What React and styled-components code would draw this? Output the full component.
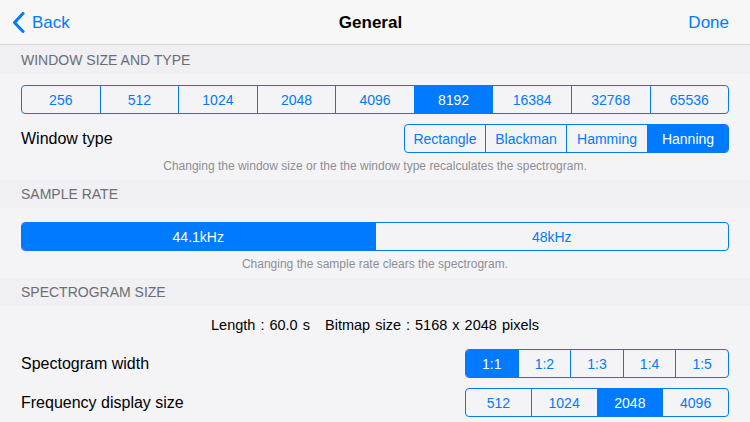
import React from "react";
import styled, { createGlobalStyle } from "styled-components";

const GlobalStyle = createGlobalStyle`
  html, body {
    margin: 0;
    padding: 0;
    background: #f4f4f7;
    font-family: "Liberation Sans", Arial, sans-serif;
    -webkit-font-smoothing: antialiased;
  }
`;

const BLUE = "#007aff";

const Page = styled.div`
  width: 750px;
  height: 422px;
  overflow: hidden;
  background: #f4f4f7;
`;

const NavBar = styled.header`
  height: 44px;
  display: grid;
  grid-template-columns: 1fr auto 1fr;
  align-items: center;
  background: #f7f7f8;
  border-bottom: 1px solid #d3d3d8;
  padding: 1px 21px 0 12px;
  box-sizing: border-box;
  height: 45px;
`;

const NavButton = styled.span`
  display: flex;
  align-items: center;
  gap: 7px;
  color: ${BLUE};
  font-size: 17px;
  justify-self: ${(p) => (p.$right ? "end" : "start")};
`;

const Title = styled.h1`
  margin: 0;
  font-size: 17px;
  font-weight: bold;
  color: #000;
`;

const SectionHeader = styled.div`
  height: ${(p) => p.$h || 28}px;
  display: flex;
  align-items: center;
  padding-left: 21px;
  background: #efeff4;
  color: #6d6d72;
  font-size: 14px;
  text-transform: uppercase;
`;

const Section = styled.section`
  padding: ${(p) => p.$top}px 21px ${(p) => p.$bottom}px;
`;

const Row = styled.div`
  display: flex;
  align-items: center;
  justify-content: space-between;
  margin-top: ${(p) => p.$mt || 0}px;
`;

const Label = styled.span`
  font-size: 16px;
  color: #000;
`;

const Note = styled.p`
  margin: 6px 0 0;
  font-size: 12px;
  line-height: 14px;
  color: #8e8e93;
  text-align: center;
`;

const Info = styled.p`
  margin: 0;
  font-size: 14.5px;
  line-height: 18px;
  color: #000;
  text-align: center;
  word-spacing: 1px;
`;

const Segments = styled.div`
  display: flex;
  width: ${(p) => p.$w}px;
  height: 29px;
  border: 1px solid ${BLUE};
  border-radius: 4px;
  overflow: hidden;
  box-sizing: border-box;
`;

const Segment = styled.div`
  flex: 1;
  display: flex;
  align-items: center;
  justify-content: center;
  font-size: 14px;
  color: ${(p) => (p.$on ? "#fff" : BLUE)};
  background: ${(p) => (p.$on ? BLUE : "transparent")};
  & + & {
    border-left: 1px solid ${BLUE};
  }
`;

const SegmentedControl = ({ items, selected, width }) => (
  <Segments $w={width}>
    {items.map((it) => (
      <Segment key={it} $on={it === selected}>
        {it}
      </Segment>
    ))}
  </Segments>
);

const Chevron = () => (
  <svg width="13" height="21" viewBox="0 0 13 21">
    <path
      d="M11 1.5 L2.5 10.5 L11 19.5"
      fill="none"
      stroke={BLUE}
      strokeWidth="3"
      strokeLinecap="round"
      strokeLinejoin="round"
    />
  </svg>
);

export default function App() {
  return (
    <Page>
      <GlobalStyle />
      <NavBar>
        <NavButton>
          <Chevron />
          Back
        </NavButton>
        <Title>General</Title>
        <NavButton $right>Done</NavButton>
      </NavBar>

      <SectionHeader $h={29}>Window size and type</SectionHeader>
      <Section $top={11} $bottom={7}>
        <SegmentedControl
          width={708}
          selected="8192"
          items={["256", "512", "1024", "2048", "4096", "8192", "16384", "32768", "65536"]}
        />
        <Row $mt={10}>
          <Label>Window type</Label>
          <SegmentedControl
            width={325}
            selected="Hanning"
            items={["Rectangle", "Blackman", "Hamming", "Hanning"]}
          />
        </Row>
        <Note>Changing the window size or the the window type recalculates the spectrogram.</Note>
      </Section>

      <SectionHeader>Sample rate</SectionHeader>
      <Section $top={14} $bottom={7}>
        <SegmentedControl width={708} selected="44.1kHz" items={["44.1kHz", "48kHz"]} />
        <Note>Changing the sample rate clears the spectrogram.</Note>
      </Section>

      <SectionHeader>Spectrogram size</SectionHeader>
      <Section $top={10} $bottom={0}>
        <Info>Length : 60.0 s&nbsp;&nbsp; Bitmap size : 5168 x 2048 pixels</Info>
        <Row $mt={15}>
          <Label>Spectogram width</Label>
          <SegmentedControl width={264} selected="1:1" items={["1:1", "1:2", "1:3", "1:4", "1:5"]} />
        </Row>
        <Row $mt={10}>
          <Label>Frequency display size</Label>
          <SegmentedControl width={264} selected="2048" items={["512", "1024", "2048", "4096"]} />
        </Row>
      </Section>
    </Page>
  );
}
